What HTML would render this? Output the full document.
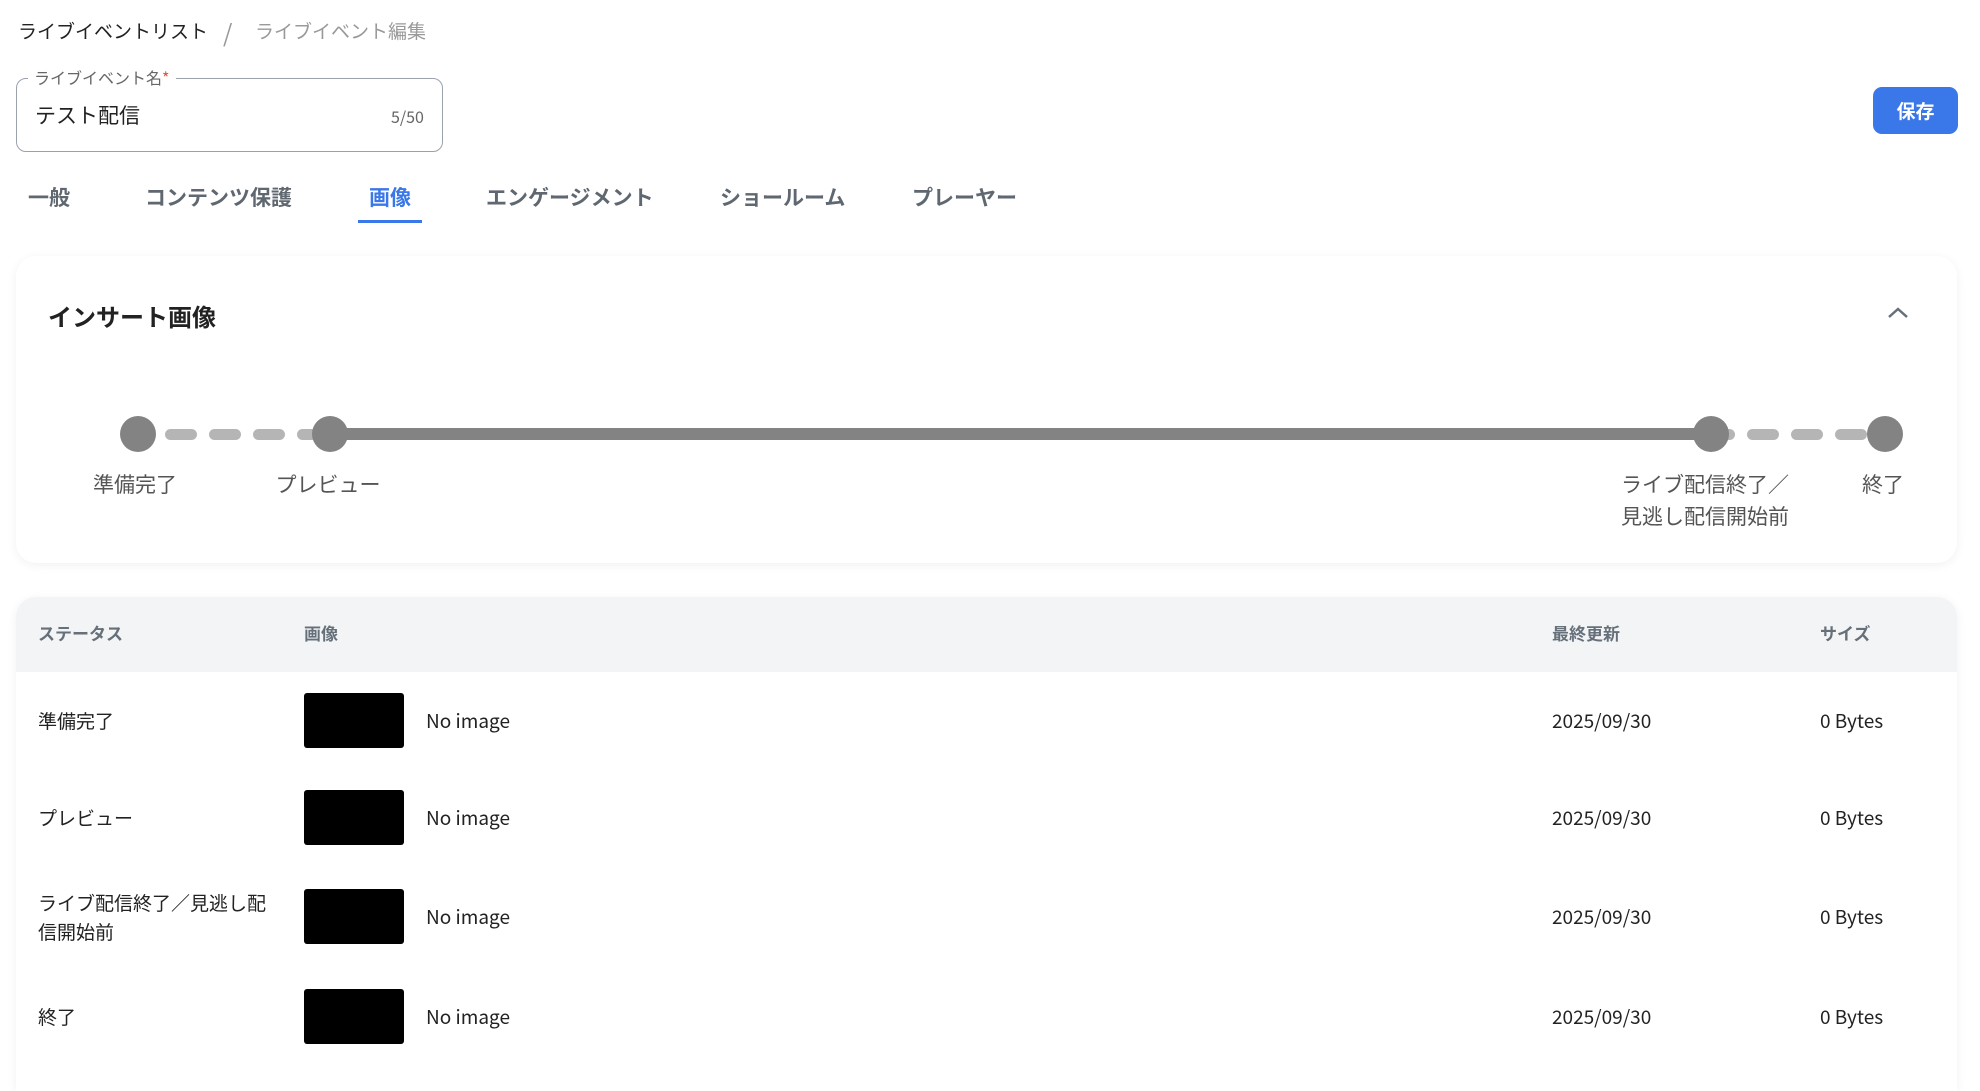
<!DOCTYPE html>
<html style="overflow:hidden;height:1091px"><head><meta charset="utf-8"><style>
*{box-sizing:border-box;margin:0;padding:0}
body{width:1980px;height:1091px;background:#fff;font-family:"Noto Sans CJK JP","Liberation Sans",sans-serif;position:relative;overflow:hidden;color:#222}
.a{position:absolute;white-space:nowrap}
.tab{position:absolute;top:182px;font-size:21px;font-weight:bold;color:#5f6770}
.card{position:absolute;left:16px;width:1941px;background:#fff;border-radius:20px;box-shadow:0 2px 10px rgba(0,0,0,0.06)}
.dot{position:absolute;width:36px;height:36px;border-radius:50%;background:#838383;top:416px}
.dash{position:absolute;width:32px;height:11px;border-radius:6px;background:#b5b5b5;top:429px}
.lbl{position:absolute;font-size:21px;color:#555;text-align:center;line-height:32px;white-space:nowrap}
.th{position:absolute;top:620px;font-size:17px;font-weight:bold;color:#66707a}
.td{position:absolute;font-size:19px;color:#222;white-space:nowrap}
.img{position:absolute;left:304px;width:100px;height:55px;background:#000;border-radius:3px}
</style></head><body>
<div class="a" style="left:18px;top:17px;font-size:19px;color:#222">ライブイベントリスト</div>
<div class="a" style="left:223px;top:14px;font-size:24px;color:#999">/</div>
<div class="a" style="left:255px;top:17px;font-size:19px;color:#999">ライブイベント編集</div>

<div style="position:absolute;left:16px;top:78px;width:427px;height:74px;border:1px solid #9aa2ad;border-radius:10px"></div>
<div class="a" style="left:28px;top:65px;background:#fff;padding:0 6px;font-size:16px;color:#666">ライブイベント名<span style="color:#e5533d">*</span></div>
<div class="a" style="left:35px;top:100px;font-size:21px;color:#222">テスト配信</div>
<div class="a" style="left:391px;top:104px;font-size:16px;color:#666">5/50</div>

<div style="position:absolute;left:1873px;top:87px;width:85px;height:47px;background:#3a77e8;border-radius:9px;color:#fff;font-weight:bold;font-size:19px;text-align:center;line-height:47px">保存</div>

<div class="tab" style="left:28px">一般</div>
<div class="tab" style="left:145px">コンテンツ保護</div>
<div class="tab" style="left:369px;color:#3a77e8">画像</div>
<div class="tab" style="left:486px">エンゲージメント</div>
<div class="tab" style="left:720px">ショールーム</div>
<div class="tab" style="left:912px">プレーヤー</div>
<div style="position:absolute;left:358px;top:220px;width:64px;height:3px;background:#3a77e8"></div>

<div class="card" style="top:256px;height:307px"></div>
<div class="a" style="left:48px;top:298px;font-size:24px;font-weight:bold;color:#222">インサート画像</div>
<svg style="position:absolute;left:1886px;top:306px" width="24" height="14" viewBox="0 0 24 14"><path d="M3 11 L12 3 L21 11" fill="none" stroke="#66707a" stroke-width="2.5"/></svg>

<div class="dash" style="left:165px"></div>
<div class="dash" style="left:209px"></div>
<div class="dash" style="left:253px"></div>
<div class="dash" style="left:297px"></div>
<div style="position:absolute;left:330px;top:428px;width:1381px;height:12px;background:#838383"></div>
<div class="dash" style="left:1703px"></div>
<div class="dash" style="left:1747px"></div>
<div class="dash" style="left:1791px"></div>
<div class="dash" style="left:1835px"></div>
<div class="dot" style="left:120px"></div>
<div class="dot" style="left:312px"></div>
<div class="dot" style="left:1693px"></div>
<div class="dot" style="left:1867px"></div>
<div class="lbl" style="left:85px;top:468px;width:100px">準備完了</div>
<div class="lbl" style="left:268px;top:468px;width:120px">プレビュー</div>
<div class="lbl" style="left:1605px;top:468px;width:200px">ライブ配信終了／<br>見逃し配信開始前</div>
<div class="lbl" style="left:1843px;top:468px;width:80px">終了</div>

<div class="card" style="top:597px;height:494px;overflow:hidden;border-radius:20px 20px 0 0"><div style="height:75px;background:#f3f4f6"></div></div>
<div class="th" style="left:38px">ステータス</div>
<div class="th" style="left:304px">画像</div>
<div class="th" style="left:1552px">最終更新</div>
<div class="th" style="left:1820px">サイズ</div>

<div class="td" style="left:38px;top:707px">準備完了</div>
<div class="img" style="top:693px"></div>
<div class="td" style="left:426px;top:707px">No image</div>
<div class="td" style="left:1552px;top:707px">2025/09/30</div>
<div class="td" style="left:1820px;top:707px">0 Bytes</div>

<div class="td" style="left:38px;top:804px">プレビュー</div>
<div class="img" style="top:790px"></div>
<div class="td" style="left:426px;top:804px">No image</div>
<div class="td" style="left:1552px;top:804px">2025/09/30</div>
<div class="td" style="left:1820px;top:804px">0 Bytes</div>

<div class="td" style="left:38px;top:888px;line-height:29px">ライブ配信終了／見逃し配<br>信開始前</div>
<div class="img" style="top:889px"></div>
<div class="td" style="left:426px;top:903px">No image</div>
<div class="td" style="left:1552px;top:903px">2025/09/30</div>
<div class="td" style="left:1820px;top:903px">0 Bytes</div>

<div class="td" style="left:38px;top:1003px">終了</div>
<div class="img" style="top:989px"></div>
<div class="td" style="left:426px;top:1003px">No image</div>
<div class="td" style="left:1552px;top:1003px">2025/09/30</div>
<div class="td" style="left:1820px;top:1003px">0 Bytes</div>
</body></html>
